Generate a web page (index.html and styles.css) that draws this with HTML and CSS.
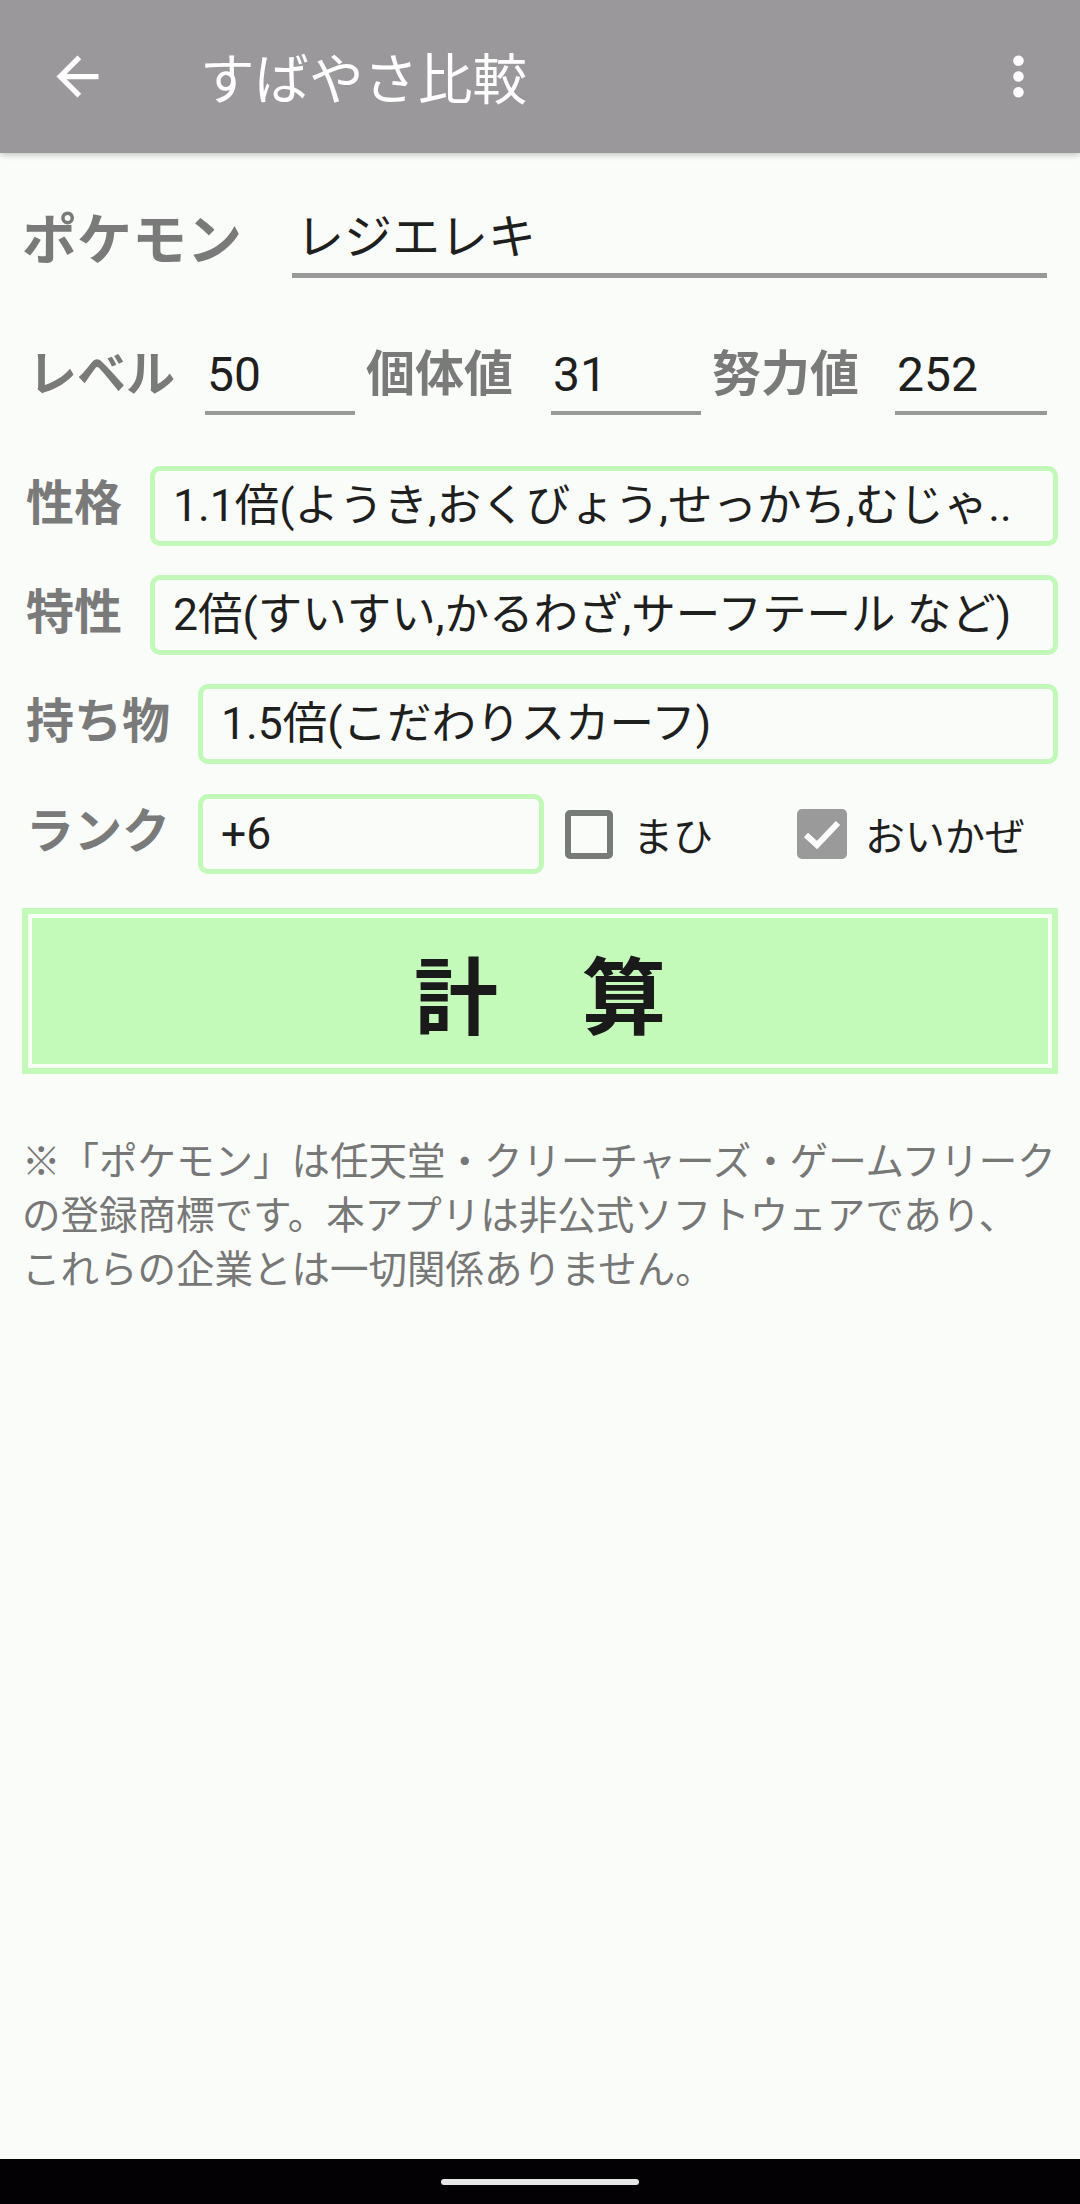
FILE: index.html
```html
<!DOCTYPE html>
<html lang="ja">
<head>
<meta charset="utf-8">
<title>すばやさ比較</title>
<link rel="stylesheet" href="styles.css">
</head>
<body>
<div class="screen">
  <header class="appbar">
    <svg class="icon back" viewBox="0 0 24 24"><path fill="#fff" d="M20 11H7.83l5.59-5.59L12 4l-8 8 8 8 1.41-1.41L7.83 13H20v-2z"/></svg>
    <h1 class="title">すばやさ比較</h1>
    <svg class="icon more" viewBox="0 0 24 24"><path fill="#fff" d="M12 8c1.1 0 2-.9 2-2s-.9-2-2-2-2 .9-2 2 .9 2 2 2zm0 2c-1.1 0-2 .9-2 2s.9 2 2 2 2-.9 2-2-.9-2-2-2zm0 6c-1.1 0-2 .9-2 2s.9 2 2 2 2-.9 2-2-.9-2-2-2z"/></svg>
  </header>
  <main class="content">
    <div class="row row-name">
      <span class="label label-lg">ポケモン</span>
      <div class="line-input line-input-lg">レジエレキ</div>
    </div>
    <div class="row row-stats">
      <span class="label stat-label first">レベル</span>
      <div class="line-input num in1">50</div>
      <span class="label stat-label">個体値</span>
      <div class="line-input num in2">31</div>
      <span class="label stat-label">努力値</span>
      <div class="line-input num in3">252</div>
    </div>
    <div class="row row-box first-box">
      <span class="label">性格</span>
      <div class="box">1.1倍(ようき,おくびょう,せっかち,むじゃ..</div>
    </div>
    <div class="row row-box">
      <span class="label">特性</span>
      <div class="box">2倍(すいすい,かるわざ,サーフテール など)</div>
    </div>
    <div class="row row-box">
      <span class="label">持ち物</span>
      <div class="box">1.5倍(こだわりスカーフ)</div>
    </div>
    <div class="row row-box row-rank">
      <span class="label">ランク</span>
      <div class="box box-rank">+6</div>
      <div class="check check-first">
        <span class="check-box"></span>
        <span class="check-text">まひ</span>
      </div>
      <div class="check">
        <span class="check-box checked"><svg viewBox="0 0 50 50"><polyline points="9,26 20,36 41,14" fill="none" stroke="#fff" stroke-width="6"/></svg></span>
        <span class="check-text">おいかぜ</span>
      </div>
    </div>
    <div class="calc"><span>計　算</span></div>
    <p class="note">※「ポケモン」は任天堂・クリーチャーズ・ゲームフリーク<br>の登録商標です。本アプリは非公式ソフトウェアであり、<br>これらの企業とは一切関係ありません。</p>
  </main>
  <footer class="navbar"><span class="pill"></span></footer>
</div>
</body>
</html>
```

FILE: styles.css
```css
* {
  box-sizing: border-box;
  margin: 0;
  padding: 0;
}

html, body {
  height: 100%;
}

body {
  background: #f9fcf8;
  font-family: Roboto, "Noto Sans CJK JP", sans-serif;
  color: #1f1f1f;
}

.screen {
  height: 100vh;
  display: flex;
  flex-direction: column;
}

/* App bar */
.appbar {
  flex: none;
  height: 153px;
  background: #9a989b;
  display: flex;
  align-items: center;
  box-shadow: 0 2px 6px rgba(0, 0, 0, 0.22);
  position: relative;
  z-index: 1;
}

.icon {
  width: 63px;
  height: 63px;
  flex: none;
}

.back {
  margin-left: 46px;
}

.title {
  margin-left: 91px;
  font-family: "Noto Sans CJK JP", sans-serif;
  font-size: 54.5px;
  font-weight: 400;
  line-height: 1;
  color: #fff;
}

.more {
  margin-left: auto;
  margin-right: 30px;
}

/* Content */
.content {
  flex: 1;
  padding: 0 22px;
}

.row {
  display: flex;
}

.label {
  font-family: "Noto Sans CJK JP", sans-serif;
  font-weight: 700;
  font-size: 48px;
  color: #7a7a7a;
  white-space: nowrap;
}

/* Pokemon row */
.row-name {
  margin-top: 50px;
  height: 75px;
  align-items: center;
  margin-right: 11px;
}

.label-lg {
  font-size: 55px;
  width: 270px;
  margin-bottom: 12px;
}

.line-input {
  border-bottom: 4px solid #999;
  font-size: 48px;
  color: #1f1f1f;
  white-space: nowrap;
}

.line-input-lg {
  flex: 1;
  height: 75px;
  line-height: 70px;
  border-bottom-width: 5px;
  padding-left: 4px;
}

/* Stats row */
.row-stats {
  margin-top: 67px;
  align-items: flex-start;
}

.stat-label {
  font-size: 49px;
  line-height: 50px;
  margin-left: 11px;
}

.stat-label.first {
  margin-left: 6px;
}

.num {
  line-height: 60px;
  padding-bottom: 6px;
  padding-left: 2px;
}

.in1 {
  width: 150px;
  margin-left: 30px;
}

.in2 {
  width: 150px;
  margin-left: 38px;
}

.in3 {
  width: 152px;
  margin-left: 36px;
}

/* Boxed rows */
.row-box {
  margin-top: 29px;
  height: 80px;
  align-items: center;
}

.row-box.first-box {
  margin-top: 51px;
}

.row-box .label {
  margin-left: 4px;
  margin-right: 28px;
  margin-bottom: 14px;
  line-height: 66px;
}

.box {
  flex: 1;
  height: 80px;
  border: 5px solid #c2f9b9;
  border-radius: 10px;
  padding-left: 18px;
  font-size: 44.5px;
  line-height: 70px;
  white-space: nowrap;
  overflow: hidden;
}

.row-rank {
  margin-top: 30px;
}

.box-rank {
  flex: none;
  width: 346px;
}

.check {
  display: flex;
  align-items: center;
}

.check-first {
  width: 232px;
  margin-left: 21px;
}

.check-box {
  width: 48px;
  height: 49px;
  border: 6px solid #777b77;
  border-radius: 5px;
  flex: none;
}

.check-box.checked {
  width: 50px;
  height: 50px;
  border: none;
  background: #9a9a9a;
}

.check-box svg {
  width: 50px;
  height: 50px;
  display: block;
}

.check-text {
  margin-left: 20px;
  font-family: "Noto Sans CJK JP", sans-serif;
  font-size: 40px;
  color: #1f1f1f;
}

.checked + .check-text {
  margin-left: 18px;
}

/* Calc button */
.calc {
  margin-top: 34px;
  height: 166px;
  background: #c3fab9;
  border: 6px solid #c3fab9;
  box-shadow: inset 0 0 0 4px #f7fff5;
  display: flex;
  align-items: center;
  justify-content: center;
  font-family: "Noto Sans CJK JP", sans-serif;
  font-weight: 700;
  font-size: 84px;
  color: #1a1a1a;
}

/* Note */
.note {
  margin-top: 57px;
  font-family: "Noto Sans CJK JP", sans-serif;
  font-size: 38.5px;
  line-height: 54px;
  color: #777;
  white-space: nowrap;
}

/* Navigation bar */
.navbar {
  flex: none;
  height: 45px;
  background: #030104;
  display: flex;
  align-items: center;
  justify-content: center;
}

.pill {
  width: 198px;
  height: 6px;
  border-radius: 3px;
  background: #e6e6e6;
}
```
